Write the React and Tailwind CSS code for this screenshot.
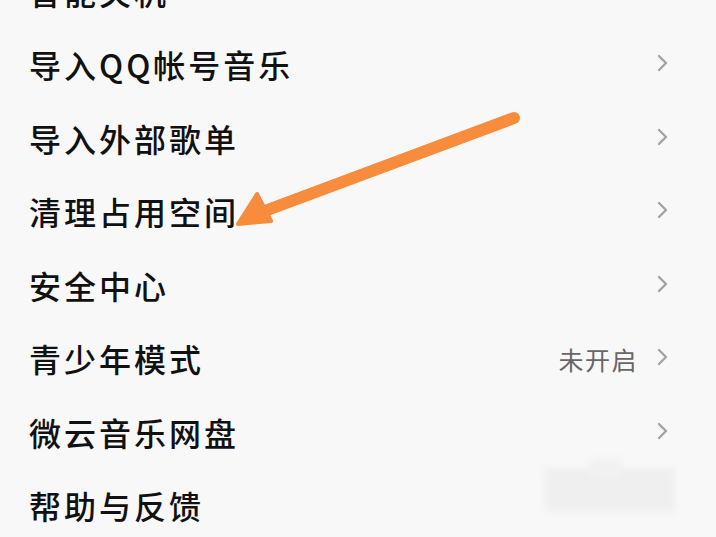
import React from "react";

const rows = [
  { t: "智能关机" },
  { t: "导入QQ帐号音乐" },
  { t: "导入外部歌单" },
  { t: "清理占用空间" },
  { t: "安全中心" },
  { t: "青少年模式", v: "未开启" },
  { t: "微云音乐网盘" },
  { t: "帮助与反馈", noChevron: true },
];

function Chevron() {
  return (
    <svg width="14" height="20" viewBox="0 0 14 20" className="shrink-0">
      <path d="M4 3 L11 10 L4 17" fill="none" stroke="#a3a3a3" strokeWidth="2.4" strokeLinecap="round" strokeLinejoin="round" />
    </svg>
  );
}

export default function App() {
  return (
    <div
      className="relative w-[716px] h-[537px] overflow-hidden bg-[#f8f8f8]"
      style={{ fontFamily: '"Noto Sans CJK SC", "Noto Sans", sans-serif' }}
    >
      <div className="mt-[-46px] flex flex-col">
        {rows.map((r, i) => (
          <div key={i} className="h-[73.5px] flex items-center pl-[29px] pr-[47px]">
            <span className="flex-1 text-[32px] leading-none tracking-[3px] text-[#111111] font-medium">
              {r.t}
            </span>
            {r.v && (
              <span className="text-[25px] leading-none tracking-[1.5px] text-[#666666] mr-[17px] translate-y-[1px]">{r.v}</span>
            )}
            {!r.noChevron && (
              <div className="translate-y-[-1px]">
                <Chevron />
              </div>
            )}
          </div>
        ))}
      </div>

      {/* faint blurred watermark */}
      <div className="absolute left-[545px] top-[468px] w-[130px] h-[44px] bg-[#efefef] blur-[3px]" />
      <div className="absolute left-[590px] top-[458px] w-[30px] h-[20px] bg-[#f1f1f1] blur-[3px]" />

      {/* orange arrow annotation */}
      <svg className="absolute left-0 top-0 pointer-events-none" width="716" height="537" viewBox="0 0 716 537">
        <line x1="514" y1="118" x2="262" y2="212" stroke="#f68c3c" strokeWidth="12" strokeLinecap="round" />
        <polygon points="238,224 257,194 271,221" fill="#f68c3c" stroke="#f68c3c" strokeWidth="4" strokeLinejoin="round" />
      </svg>
    </div>
  );
}
